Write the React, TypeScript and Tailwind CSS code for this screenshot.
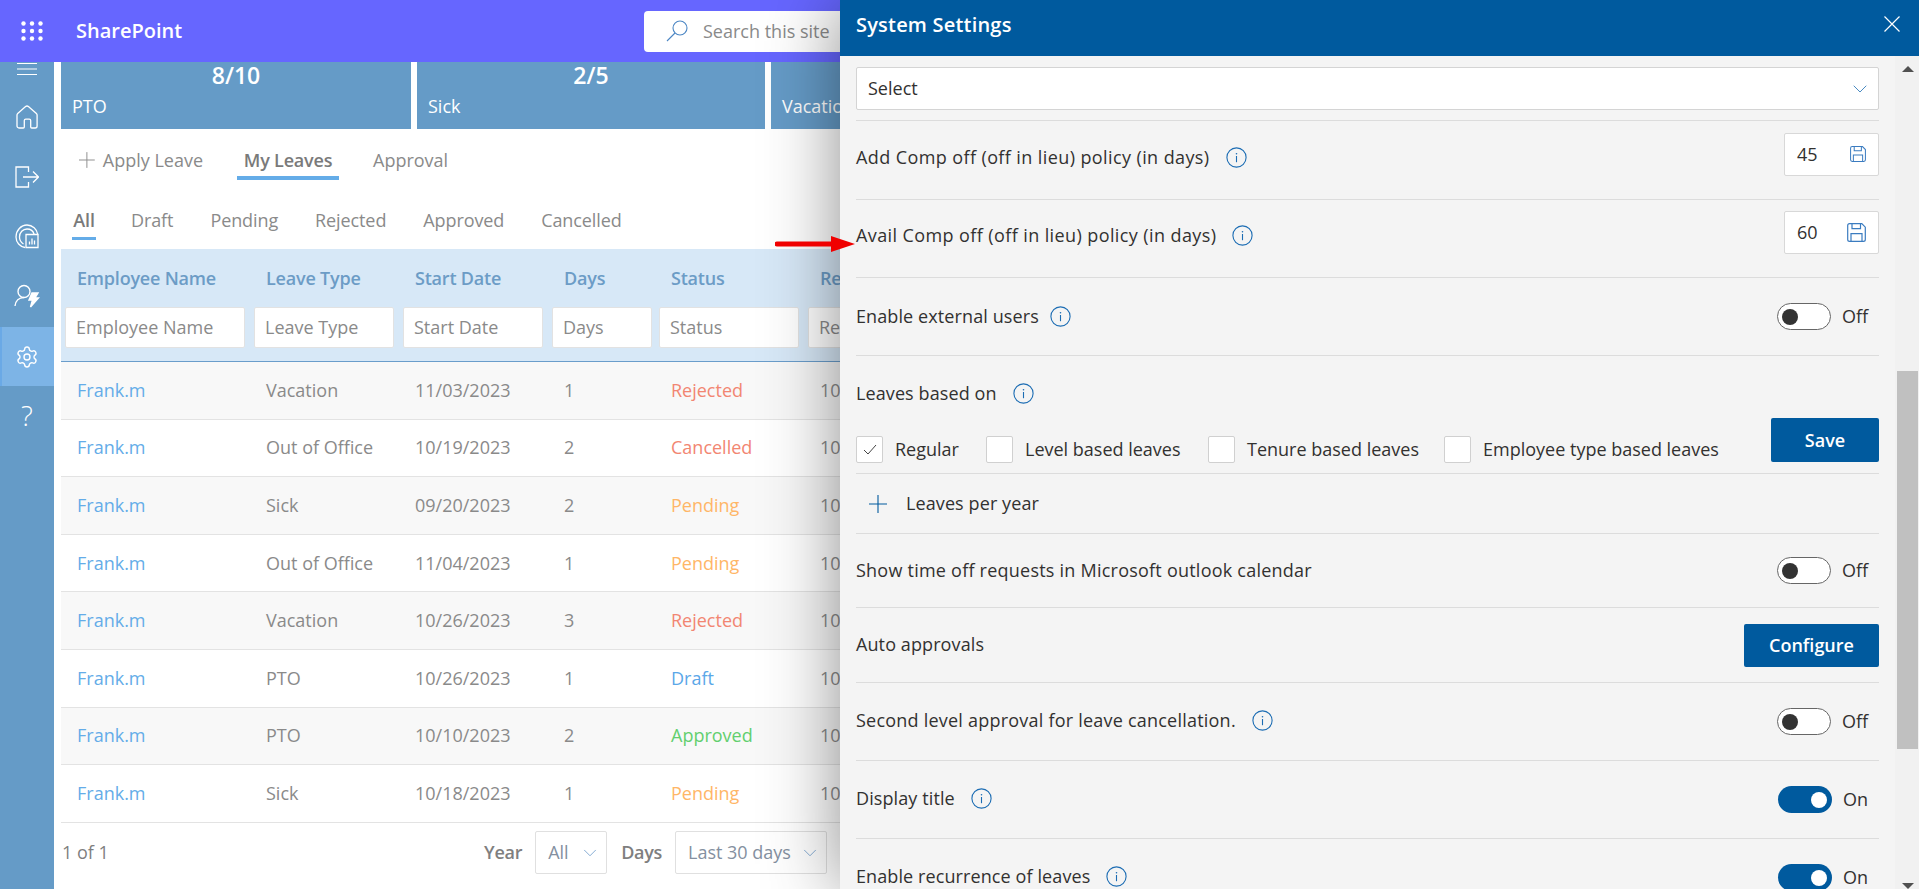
import { ChevronDown, Settings } from "lucide-react";

const rows = [
  { name: "Frank.m", type: "Vacation", start: "11/03/2023", days: 1, status: "Rejected", end: "10/03/2023" },
  { name: "Frank.m", type: "Out of Office", start: "10/19/2023", days: 2, status: "Cancelled", end: "10/20/2023" },
  { name: "Frank.m", type: "Sick", start: "09/20/2023", days: 2, status: "Pending", end: "10/01/2023" },
  { name: "Frank.m", type: "Out of Office", start: "11/04/2023", days: 1, status: "Pending", end: "10/04/2023" },
  { name: "Frank.m", type: "Vacation", start: "10/26/2023", days: 3, status: "Rejected", end: "10/26/2023" },
  { name: "Frank.m", type: "PTO", start: "10/26/2023", days: 1, status: "Draft", end: "10/26/2023" },
  { name: "Frank.m", type: "PTO", start: "10/10/2023", days: 2, status: "Approved", end: "10/10/2023" },
  { name: "Frank.m", type: "Sick", start: "10/18/2023", days: 1, status: "Pending", end: "10/18/2023" },
];

const statusColor: Record<string, string> = {
  Rejected: "text-[#f28672]",
  Cancelled: "text-[#f28672]",
  Pending: "text-[#ffb667]",
  Draft: "text-[#5ba7e8]",
  Approved: "text-[#62cf6e]",
};

const columns = ["Employee Name", "Leave Type", "Start Date", "Days", "Status", "Requested"];

const InfoIcon = () => (
  <svg width="21" height="21" viewBox="0 0 21 21" className="shrink-0" fill="none">
    <circle cx="10.5" cy="10.5" r="9.6" stroke="#1b6cb3" strokeWidth="1.1" />
    <path d="M10.5 9v6.2" stroke="#1b6cb3" strokeWidth="1.1" />
    <circle cx="10.5" cy="6.7" r="0.8" fill="#1b6cb3" />
  </svg>
);

const SaveIcon = ({ size }: { size: number }) => (
  <svg width={size} height={size} viewBox="0 0 19 19" fill="none" stroke="#3b7cc0" strokeWidth="1.2">
    <path d="M2.6.7h12.2l3.5 3.5v12.2a1.9 1.9 0 0 1-1.9 1.9H2.6a1.9 1.9 0 0 1-1.9-1.9V2.6A1.9 1.9 0 0 1 2.6.7Z" />
    <path d="M5 .7v5h8.5v-5M4 18.3v-7.6h11v7.6" />
  </svg>
);

const Toggle = ({ on }: { on?: boolean }) => (
  <div className="flex w-[102px] items-center">
    {on ? (
      <div className="ml-px flex h-[27px] w-[54px] items-center justify-end rounded-full bg-[#005a9e] pr-[5px]">
        <div className="size-[16px] rounded-full bg-white" />
      </div>
    ) : (
      <div className="flex h-[27px] w-[54px] items-center rounded-full border border-[#666] bg-white pl-[4px]">
        <div className="size-[16px] rounded-full bg-[#333]" />
      </div>
    )}
    <span className="ml-[11px] text-[18px] text-[#323130]">{on ? "On" : "Off"}</span>
  </div>
);

const Label = ({
  children,
  info,
  gap = "gap-[16px]",
  tracking = "tracking-[0.1px]",
}: {
  children: string;
  info?: boolean;
  gap?: string;
  tracking?: string;
}) => (
  <div className={`flex items-center ${gap}`}>
    <span className={`text-[18px] font-medium text-[#323130] ${tracking}`}>{children}</span>
    {info && <InfoIcon />}
  </div>
);

const Checkbox = ({ label, checked, width }: { label: string; checked?: boolean; width: string }) => (
  <div className={`flex items-center gap-[12px] ${width}`}>
    <div className="flex size-[27px] shrink-0 items-center justify-center rounded-[2px] border border-[#d0d0d0] bg-white">
      {checked && (
        <svg width="14" height="11" viewBox="0 0 14 11" fill="none" stroke="#444" strokeWidth="1">
          <path d="M1 6l4 4 8-9" />
        </svg>
      )}
    </div>
    <span className="whitespace-nowrap text-[18px] font-medium text-[#323130]">{label}</span>
  </div>
);

const NumberBox = ({ value, iconSize }: { value: string; iconSize: number }) => (
  <div className="flex h-[43px] w-[95px] items-center justify-between rounded-[2px] border border-[#d8d8d8] bg-white pl-[12px] pr-[12px]">
    <span className="text-[18px] text-[#323130]">{value}</span>
    <SaveIcon size={iconSize} />
  </div>
);

const PrimaryButton = ({ label, width, height }: { label: string; width: string; height: string }) => (
  <button className={`flex items-center justify-center rounded-[2px] bg-[#005a9e] text-[18px] font-semibold text-white ${width} ${height}`}>
    {label}
  </button>
);

const Row = ({ height, children }: { height: string; children: React.ReactNode }) => (
  <div className={`flex shrink-0 items-center justify-between border-b border-[#dcdcdc] ${height}`}>{children}</div>
);

const Sidebar = () => (
  <div className="flex h-full w-[54px] shrink-0 flex-col items-center bg-[#659bc7] text-white">
    <div className="flex h-[25px] w-full items-start justify-center">
      <svg width="20" height="14" viewBox="0 0 20 14" stroke="white" strokeWidth="1.2">
        <path d="M0 1.5h20M0 7h20M0 12.5h20" />
      </svg>
    </div>
    <div className="flex h-[60px] w-full items-center justify-center">
      <svg width="22" height="24" viewBox="0 0 22 24" fill="none" stroke="white" strokeWidth="1.3">
        <path d="M9.6 1.6a2.1 2.1 0 0 1 2.8 0l8 7a2 2 0 0 1 .7 1.5V21a2 2 0 0 1-2 2h-3.4a1 1 0 0 1-1-1v-6.4a1.5 1.5 0 0 0-1.5-1.5H9.8a1.5 1.5 0 0 0-1.5 1.5V22a1 1 0 0 1-1 1H3a2 2 0 0 1-2-2V10.100a2 2 0 0 1 .7-1.500Z" />
      </svg>
    </div>
    <div className="flex h-[60px] w-full items-center justify-center">
      <svg width="24" height="22" viewBox="0 0 24 22" fill="none" stroke="white" strokeWidth="1.3">
        <path d="M13.500 6V1H1v20h12.500v-5M8 11h15M18 5.500 23.500 11 18 16.500" />
      </svg>
    </div>
    <div className="flex h-[59px] w-full items-center justify-center">
      <svg width="24" height="25" viewBox="0 0 24 25" fill="none" stroke="white" strokeWidth="1.3">
        <path d="M10 23.500C5 22.800 1 18.500 1 13 1 6.500 6 1 12 1c5.500 0 10 4.200 10.800 9.500" />
        <path d="M8.500 20C6 18.500 4.500 16 4.500 13c0-4.500 3.400-8 7.500-8 3.500 0 6.300 2.300 7.200 5.500" />
        <path d="M11 10.500h12v13H11zM14.500 20.500v-3M17 20.500v-6M19.500 20.500v-4" />
      </svg>
    </div>
    <div className="flex h-[61px] w-full items-center justify-center pb-[2px]">
      <svg width="26" height="24" viewBox="0 0 26 24" fill="none" stroke="white" strokeWidth="1.4">
        <circle cx="10" cy="7.500" r="6" />
        <path d="M1 22c.5-5 4-8.500 9-8.500" />
        <path d="M18 9h6l-3 5h3.500l-8 9 2-7H15Z" fill="white" />
      </svg>
    </div>
    <div className="flex h-[59px] w-full items-center justify-center border-l-2 border-[#6aa9e6] bg-[#7db4e6] pr-[2px]">
      <Settings size={24} strokeWidth={1.4} />
    </div>
    <div className="flex h-[58px] w-full items-center justify-center text-[28px] font-light">?</div>
  </div>
);

const LeaveCard = ({ value, label, width }: { value: string; label: string; width: string }) => (
  <div className={`relative h-[67px] shrink-0 bg-[#659bc7] px-[11px] text-white ${width}`}>
    <div className="text-center text-[23px] font-semibold leading-[27px]">{value}</div>
    <div className="mt-[4px] text-[18px]">{label}</div>
  </div>
);

const LeftContent = () => (
  <div className="flex h-full w-[779px] shrink-0 flex-col overflow-hidden text-[18px]">
    <div className="flex gap-[6px]">
      <LeaveCard value="8/10" label="PTO" width="w-[350px]" />
      <LeaveCard value="2/5" label="Sick" width="w-[348px]" />
      <LeaveCard value="1/5" label="Vacation" width="w-[348px]" />
    </div>

    <div className="mt-[15px] flex h-[36px] text-[#8a8a8a]">
      <div className="ml-[18px] flex h-[32px] w-[124px] shrink-0 items-center gap-[8px] whitespace-nowrap">
        <svg width="16" height="16" viewBox="0 0 16 16" stroke="#8f8f8f" strokeWidth="1">
          <path d="M8 0v16M0 8h16" />
        </svg>
        Apply Leave
      </div>
      <div className="ml-[34px] h-[36px] w-[102px] shrink-0 whitespace-nowrap border-b-4 border-[#64ace8] text-center font-semibold leading-[32px] tracking-[-0.2px] text-[#7a7a7a]">
        My Leaves
      </div>
      <div className="ml-[34px] leading-[32px]">Approval</div>
    </div>

    <div className="ml-[11px] mt-[24px] flex h-[36px] gap-[37px] tracking-[-0.1px] text-[#8a8a8a]">
      <div className="-mr-[2px] h-[36px] w-[24px] border-b-[3px] border-[#64ace8] text-center font-semibold leading-[32px] text-[#7a7a7a]">All</div>
      <div className="leading-[32px]">Draft</div>
      <div className="leading-[32px]">Pending</div>
      <div className="leading-[32px]">Rejected</div>
      <div className="leading-[32px]">Approved</div>
      <div className="leading-[32px]">Cancelled</div>
    </div>

    <div className="mt-[9px] grid grid-cols-[189px_149px_149px_107px_149px_1fr] border-b border-[#6a9dcb] bg-[#d7e8f7] pb-[13px]">
      {columns.map((c) => (
        <div key={c} className="flex h-[58px] items-center whitespace-nowrap pl-[16px] font-semibold tracking-[-0.2px] text-[#6c9cc6]">
          {c}
        </div>
      ))}
      {columns.map((c, i) => (
        <div key={c} className="overflow-hidden pl-[4px] pr-[5px]">
          <div className={`flex h-[41px] items-center whitespace-nowrap rounded-[2px] border border-[#e2e2e2] bg-white pl-[10px] text-[#8a8a8a] ${i === 3 ? "mr-[-2px]" : ""}`}>
            {c}
          </div>
        </div>
      ))}
    </div>

    {rows.map((r, i) => (
      <div
        key={i}
        className={`grid h-[57.6px] shrink-0 grid-cols-[189px_149px_149px_107px_149px_1fr] items-center border-b border-[#e3e3e3] text-[#8a8a8a] ${i % 2 === 0 ? "bg-[#f8f8f8]" : "bg-white"}`}
      >
        <div className="pl-[16px] text-[#64ace8]">{r.name}</div>
        <div className="pl-[16px]">{r.type}</div>
        <div className="pl-[16px]">{r.start}</div>
        <div className="pl-[16px]">{r.days}</div>
        <div className={`pl-[16px] ${statusColor[r.status]}`}>{r.status}</div>
        <div className="pl-[16px]">{r.end}</div>
      </div>
    ))}

    <div className="flex flex-1 items-center justify-between pb-[6px] pr-[13px] text-[#7f7f7f]">
      <span className="pl-px">1 of 1</span>
      <div className="flex items-center">
        <span className="font-semibold tracking-[-0.3px]">Year</span>
        <div className="ml-[13px] flex h-[43px] w-[72px] items-center justify-between rounded-[2px] border border-[#e0e0e0] pl-[12px] pr-[5px] text-[#8490a0]">
          All <ChevronDown size={22} strokeWidth={0.8} color="#5b8fc4" />
        </div>
        <span className="ml-[14px] font-semibold tracking-[-0.3px]">Days</span>
        <div className="ml-[13px] flex h-[43px] w-[152px] items-center justify-between whitespace-nowrap rounded-[2px] border border-[#e0e0e0] pl-[12px] pr-[5px] text-[#8490a0]">
          Last 30 days <ChevronDown size={22} strokeWidth={0.8} color="#5b8fc4" />
        </div>
      </div>
    </div>
  </div>
);

const SettingsPanel = () => (
  <div className="absolute bottom-0 right-0 top-0 z-10 flex w-[1079px] flex-col bg-[#f4f4f4] shadow-[0_0_70px_rgba(0,0,0,0.45)]">
    <div className="flex h-[56px] shrink-0 items-center justify-between bg-[#005a9e] pl-[16px] pr-[19px] text-white">
      <span className="pb-[6px] text-[20px] font-semibold tracking-[0.2px]">System Settings</span>
      <svg width="16" height="16" viewBox="0 0 16 16" stroke="white" strokeWidth="1.200" className="mb-[8px]">
        <path d="M.5.5l15 15M15.500.5l-15 15" />
      </svg>
    </div>
    <div className="flex min-h-0 flex-1">
      <div className="flex min-w-0 flex-1 flex-col overflow-hidden pl-[16px] pr-[16px]">
        <div className="flex h-[65px] shrink-0 flex-col justify-start border-b border-[#dcdcdc] pt-[11px]">
          <div className="flex h-[43px] items-center justify-between rounded-[2px] border border-[#d4d4d4] bg-white pl-[11px] pr-[6px]">
            <span className="text-[18px] text-[#323130]">Select</span>
            <ChevronDown size={24} strokeWidth={0.8} color="#1b6cb3" />
          </div>
        </div>
        <Row height="h-[79px]">
          <div className="mb-[6px]"><Label info tracking="tracking-[0.4px]">Add Comp off (off in lieu) policy (in days)</Label></div>
          <div className="mb-[12px]"><NumberBox value="45" iconSize={16} /></div>
        </Row>
        <Row height="h-[78px]">
          <div className="mb-[6px]"><Label info tracking="tracking-[0.4px]">Avail Comp off (off in lieu) policy (in days)</Label></div>
          <div className="mb-[12px]"><NumberBox value="60" iconSize={19} /></div>
        </Row>
        <Row height="h-[78px]">
          <Label info gap="gap-[11px]">Enable external users</Label>
          <Toggle />
        </Row>
        <div className="relative h-[118px] shrink-0 border-b border-[#dcdcdc]">
          <div className="mt-[24px]"><Label info>Leaves based on</Label></div>
          <div className="mt-[29px] flex">
            <Checkbox label="Regular" checked width="w-[130px]" />
            <Checkbox label="Level based leaves" width="w-[222px]" />
            <Checkbox label="Tenure based leaves" width="w-[236px]" />
            <Checkbox label="Employee type based leaves" width="w-[260px]" />
          </div>
          <div className="absolute bottom-[11px] right-0">
            <PrimaryButton label="Save" width="w-[108px]" height="h-[44px]" />
          </div>
        </div>
        <Row height="h-[60px]">
          <div className="flex items-center gap-[19px] pl-[13px]">
            <svg width="18" height="18" viewBox="0 0 18 18" stroke="#005a9e" strokeWidth="1.1">
              <path d="M9 0v18M0 9h18" />
            </svg>
            <Label>Leaves per year</Label>
          </div>
        </Row>
        <Row height="h-[74px]">
          <Label tracking="tracking-[0.23px]">Show time off requests in Microsoft outlook calendar</Label>
          <Toggle />
        </Row>
        <Row height="h-[75px]">
          <div className="mb-[2px]"><Label>Auto approvals</Label></div>
          <PrimaryButton label="Configure" width="w-[135px]" height="h-[43px]" />
        </Row>
        <Row height="h-[78px]">
          <div className="mb-[3px]"><Label info tracking="tracking-[0.22px]">Second level approval for leave cancellation.</Label></div>
          <Toggle />
        </Row>
        <Row height="h-[78px]">
          <div className="mb-[3px]"><Label info>Display title</Label></div>
          <Toggle on />
        </Row>
        <Row height="h-[78px]">
          <div className="mb-[3px]"><Label info>Enable recurrence of leaves</Label></div>
          <Toggle on />
        </Row>
      </div>
      <div className="flex w-[24px] shrink-0 flex-col items-center bg-[#f1f1f1] pl-[2px] pr-px">
        <div className="mt-[10px] h-0 w-0 border-x-[6px] border-b-[6px] border-x-transparent border-b-[#505050]" />
        <div className="mt-[299px] h-[378px] w-full shrink-0 bg-[#c0c0c0]" />
        <div className="mt-[134px] h-0 w-0 border-x-[6px] border-t-[6px] border-x-transparent border-t-[#505050]" />
      </div>
    </div>
  </div>
);

export default function App() {
  return (
    <div className="relative flex h-[889px] w-[1919px] flex-col overflow-hidden bg-white font-['Open_Sans',sans-serif]">
      <div className="flex h-[62px] shrink-0 items-center bg-[#6666ff] text-white">
        <svg width="22" height="20" viewBox="0 0 22 20" className="ml-[21px]" fill="white">
          <circle cx="2.500" cy="2.500" r="2.200" />
          <circle cx="11" cy="2.500" r="2.200" />
          <circle cx="19.500" cy="2.500" r="2.200" />
          <circle cx="2.500" cy="10" r="2.200" />
          <circle cx="11" cy="10" r="2.200" />
          <circle cx="19.500" cy="10" r="2.200" />
          <circle cx="2.500" cy="17.500" r="2.200" />
          <circle cx="11" cy="17.500" r="2.200" />
          <circle cx="19.500" cy="17.500" r="2.200" />
        </svg>
        <span className="ml-[33px] w-[106px] whitespace-nowrap text-[20px] font-semibold">SharePoint</span>
        <div className="ml-[462px] flex h-[41px] w-[240px] items-center rounded-[4px] bg-white pl-[22px] text-[18px] text-[#8a8a8a]">
          <svg width="22" height="22" viewBox="0 0 22 22" fill="none" stroke="#4b86c4" strokeWidth="1.100">
            <circle cx="14" cy="8" r="7" />
            <path d="M9 13 1 21" />
          </svg>
          <span className="ml-[15px] whitespace-nowrap">Search this site</span>
        </div>
      </div>

      <div className="flex min-h-0 flex-1">
        <Sidebar />
        <div className="w-[7px] shrink-0" />
        <LeftContent />
      </div>

      <SettingsPanel />

      <svg width="80" height="16" viewBox="0 0 80 16" className="absolute left-[775px] top-[236px] z-20" fill="#f00000">
        <path d="M2 5.500h54V0l24 8-24 8v-5.500H2a2.500 2.500 0 0 1 0-5Z" />
      </svg>
    </div>
  );
}
